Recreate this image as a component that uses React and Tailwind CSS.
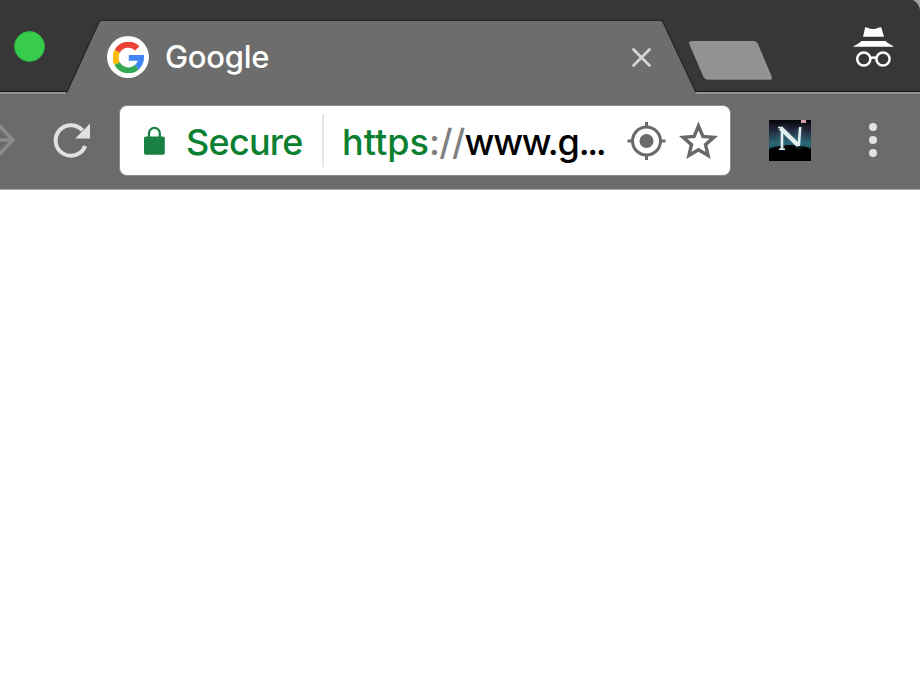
import React from 'react';

function TabStrip() {
  return (
    <header className="relative flex h-[94px] w-full bg-[#373737]">
      <div className="flex h-[92px] w-[66px] shrink-0 border-b border-[#161616] pl-[14px] pt-[31px]">
        <div className="size-[31px] rounded-full border border-[#2fb53f] bg-[#37cc4b]" />
      </div>
      <div className="relative flex h-[94px] w-[631px] shrink-0 items-start">
        <svg className="absolute inset-0" width="631" height="94" viewBox="0 0 631 94" aria-hidden="true">
          <path d="M0 94 L1.5 92 L33 23 Q34 21 36 21 H594 Q596 21 597 23 L629.5 92 L631 94Z" fill="#6d6d6d" />
          <path d="M0 91.5 H1 L33 22 Q34 20.3 36 20.3 H594 Q596 20.3 597 22 L629.5 91.5 H631" fill="none" stroke="#222" strokeWidth="1.1" />
        </svg>
        <div className="relative ml-[41px] mt-[36px] flex size-[42px] items-center justify-center rounded-full bg-white">
          <svg width="31" height="31" viewBox="0 0 31 31" fill="none" strokeWidth="6" aria-hidden="true">
            <path d="M4.2 9.4 A12.7 12.7 0 0 1 24.3 6.3" stroke="#ea4335" />
            <path d="M4.2 21.6 A12.7 12.7 0 0 1 4.2 9.4" stroke="#fbbc05" />
            <path d="M23.8 25.2 A12.7 12.7 0 0 1 4.2 21.6" stroke="#34a853" />
            <path d="M15.8 15.8 H28.1 A12.7 12.7 0 0 1 23.8 25.2" stroke="#4285f4" strokeWidth="5.8" />
          </svg>
        </div>
        <span className="relative ml-[16px] mt-[37px] w-[440px] text-[31px] font-medium leading-[40px] tracking-[-0.3px] text-white">Google</span>
        <svg className="relative ml-[26px] mt-[47px] shrink-0" width="21" height="21" viewBox="0 0 21 21" aria-label="Close">
          <path d="M2.5 2.5 L18.5 18.5 M18.5 2.5 L2.5 18.5" stroke="#d7d7d7" strokeWidth="2.6" strokeLinecap="round" />
        </svg>
      </div>
      <div className="flex h-[92px] flex-1 items-start justify-between border-b border-[#161616] pr-[25px]">
        <svg className="-ml-[9px] mt-[40px]" width="86" height="41" viewBox="0 0 86 41" aria-label="New tab">
          <path d="M4 1 H65 Q68.5 1 70 4 L83.5 36 Q85 39.8 81.5 39.8 H20 Q17 39.8 15.5 37 L1.5 4.5 Q0 1 4 1Z" fill="#929292" />
        </svg>
        <svg className="mt-[26px]" width="44" height="43" viewBox="0 0 44 43" aria-label="Incognito">
          <path d="M14 1.2 Q15 1 16 1.5 Q22 4.5 28 1.5 Q29.5 1 30.3 1.6 L33 10.8 H12 L14.2 1.2Z" fill="#fff" />
          <path d="M10.5 15 H34.5 C37 17.5 40 18.8 43 20.7 H2 C5 18.8 8.2 17.5 10.5 15Z" fill="#fff" />
          <g fill="none" stroke="#fff" strokeWidth="2.5">
            <circle cx="12.8" cy="33" r="6.6" /><circle cx="32" cy="33" r="6.6" />
            <path d="M19.4 32 Q22.4 30.8 25.4 32" />
          </g>
        </svg>
      </div>
      <div className="absolute bottom-0 left-0 h-[2px] w-[66px] bg-[#929292]" />
      <div className="absolute bottom-0 right-0 h-[2px] w-[224px] bg-[#929292]" />
      <svg className="absolute right-0 top-0" width="8" height="10" viewBox="0 0 8 10" aria-hidden="true">
        <path d="M1 0 H8 V10 Q7 3 1 0Z" fill="#a3a3a3" />
      </svg>
    </header>
  );
}

function AddressBar() {
  return (
    <div className="ml-[28px] mt-[11px] flex h-[71px] w-[612px] shrink-0 items-center rounded-[8px] border border-[#8b8b8b] bg-white">
      <svg className="ml-[23px]" width="23" height="30" viewBox="0 0 23 30" aria-hidden="true">
        <path d="M6 13 V7.3 A5.4 5.4 0 0 1 16.8 7.3 V13" fill="none" stroke="#1a8043" strokeWidth="2.3" />
        <rect x="1" y="10.5" width="20.8" height="18.3" rx="1.8" fill="#1a8043" />
      </svg>
      <span className="ml-[20px] w-[118px] whitespace-nowrap pt-[2px] text-[36px] font-[450] leading-[46px] tracking-[-0.75px] text-[#0b8031]">Secure</span>
      <div className="ml-[18px] h-[53px] w-[2px] bg-[#e7e7e7]" />
      <span className="ml-[18px] w-[266px] whitespace-nowrap pt-[2px] text-[36px] font-[450] leading-[46px] text-black">
        <span className="tracking-[0.05px] text-[#0b8031]">https</span><span className="tracking-[-0.7px] text-[#808080]">://</span><span className="tracking-[-1.2px]">www.g</span><span className="tracking-[-2.4px]">...</span>
      </span>
      <svg className="ml-[18px] shrink-0" width="40" height="40" viewBox="0 0 40 40" aria-label="Location">
        <g fill="none" stroke="#696969" strokeWidth="3">
          <circle cx="20.5" cy="20" r="14" /><path d="M20.5 1 V7 M20.5 33 V39 M1.5 20 H7.5 M33.5 20 H39.5" />
        </g>
        <circle cx="20.5" cy="20" r="7" fill="#696969" />
      </svg>
      <svg className="ml-[12px] shrink-0" width="40" height="40" viewBox="0 0 40 40" aria-label="Bookmark">
        <path d="M20.5 5 L24.9 15.5 L35.8 16.3 L27.5 23.6 L30.1 34.5 L20.5 28.7 L10.9 34.5 L13.5 23.6 L5.2 16.3 L16.1 15.5Z" fill="none" stroke="#696969" strokeWidth="3.4" />
      </svg>
    </div>
  );
}

function NetscapeIcon() {
  return (
    <svg className="ml-[38px] mt-[26px] shrink-0" width="42" height="41" viewBox="0 0 42 41" aria-label="Extension">
      <defs>
        <linearGradient id="sky" x1="0" y1="0" x2="0" y2="1">
          <stop offset="0" stopColor="#050509" /><stop offset=".35" stopColor="#232638" /><stop offset=".8" stopColor="#2b6878" /><stop offset="1" stopColor="#1b4d58" />
        </linearGradient>
        <filter id="soft"><feGaussianBlur stdDeviation=".6" /></filter>
        <filter id="glow" x="-30%" y="-30%" width="160%" height="160%"><feGaussianBlur stdDeviation="2" /></filter>
      </defs>
      <rect width="42" height="41" fill="#020303" />
      <rect width="42" height="29" fill="url(#sky)" />
      <path d="M0 29 Q10 25 21 25 Q33 25 42 29 V41 H0Z" fill="#010202" filter="url(#soft)" />
      <rect x="32" y="0" width="5" height="3" fill="#d3a0aa" filter="url(#soft)" />
      <path d="M13 8 V28 M12 8 L30 25 V8" fill="none" stroke="#3f7b89" strokeWidth="4" opacity=".6" filter="url(#glow)" />
      <g fill="none" stroke="#e2efef" filter="url(#soft)">
        <path d="M13 8 V29 M31.2 7 L29.8 26" strokeWidth="2.6" />
        <path d="M11.5 8 L29.5 25.5" strokeWidth="4.5" />
        <path d="M9 7.5 H14 M10 29.3 H16" strokeWidth="1.5" />
      </g>
    </svg>
  );
}

function Toolbar() {
  return (
    <div className="flex h-[96px] w-full items-start border-b border-[#aaa] bg-[#6b6b6b]">
      <svg className="mt-[26px] shrink-0" width="17" height="40" viewBox="0 0 17 40" aria-label="Forward">
        <path d="M-5 1 L13 20 L-5 39 M-4 20 H13" fill="none" stroke="#8b8b8b" strokeWidth="3.6" />
      </svg>
      <svg className="ml-[34px] mt-[27px] shrink-0" width="40" height="40" viewBox="0 0 40 40" aria-label="Reload">
        <path d="M34.2 25 A15.3 15.3 0 1 1 31.5 9.4" fill="none" stroke="#e1e1e1" strokeWidth="4" />
        <path d="M39 2.5 V17.5 H24.2Z" fill="#e1e1e1" />
      </svg>
      <AddressBar />
      <NetscapeIcon />
      <div className="ml-[58px] mt-[29px] flex flex-col gap-[5px]" aria-label="Menu">
        <div className="size-[8px] rounded-full bg-[#e1e1e1]" />
        <div className="size-[8px] rounded-full bg-[#e1e1e1]" />
        <div className="size-[8px] rounded-full bg-[#e1e1e1]" />
      </div>
    </div>
  );
}

export default function App() {
  return (
    <main className="flex h-[680px] w-[920px] flex-col overflow-hidden bg-white font-['Inter',sans-serif]">
      <TabStrip />
      <Toolbar />
      <div className="flex-1 bg-white" />
    </main>
  );
}
